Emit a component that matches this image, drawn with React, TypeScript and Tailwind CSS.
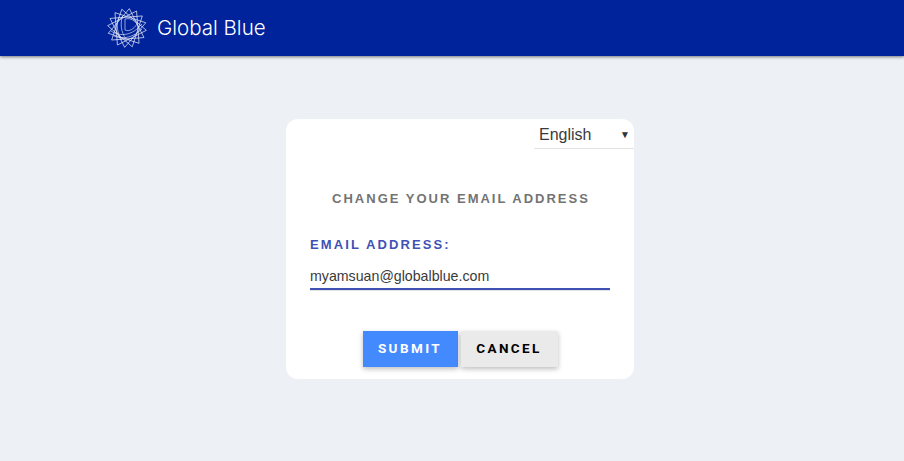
const spikes = 16;
const outer = Array.from({ length: spikes }, (_, i) => {
  const a = (i / spikes) * Math.PI * 2 - Math.PI / 2 + 0.12;
  return [20 + 19.5 * Math.cos(a), 20 + 19.5 * Math.sin(a)];
});

// lines running across the star, each one ends in a spike tip
const starPath = outer
  .map((_, i) => {
    const p = outer[(i * 5) % spikes];
    return `${i === 0 ? 'M' : 'L'}${p[0].toFixed(2)} ${p[1].toFixed(2)}`;
  })
  .join(' ') + ' Z';

const GlobeLogo = () => (
  <svg width="40" height="40" viewBox="0 0 40 40" fill="none" stroke="#e4e9f8" strokeWidth="0.75">
    <path d={starPath} />
    <path d="M12 9 C9 17 10 25 15 32 M15.5 8 C13 16 14 24 19 31 M18 11 L18 22 C22 24 27 21 30 16 C26 11 22 10 18 11 Z M4 23 C13 29 25 28 35 16 M7 28 C16 32 27 29 35 21" strokeOpacity="0.85" />
  </svg>
);

const App = () => {
  return (
    <div className="min-h-[461px] bg-[#edf0f5] font-['Liberation_Sans',Arial,sans-serif]">
      <header className="flex h-14 items-center bg-[#00229a] pl-[107px] shadow-[0_1px_3px_rgba(0,0,0,0.5)]">
        <GlobeLogo />
        <span className="ml-[10px] font-['Inter',sans-serif] text-[20.5px] font-light text-white">
          Global Blue
        </span>
      </header>

      <div className="flex justify-center pl-4 pt-[63px]">
        <div className="h-[260px] w-[348px] rounded-xl bg-white">
          <div className="flex justify-end">
            <div className="flex h-[30px] w-[100px] items-center justify-between border-b border-[#e2e2e6] pl-[5px] pr-[4px] pt-[2px] text-base text-[#3a3a3a]">
              <span>English</span>
              <span className="text-[10px] text-[#333]">▼</span>
            </div>
          </div>

          <h1 className="mt-[42px] pl-[2px] text-center text-[13px] font-bold leading-[16px] tracking-[2px] text-[#737373]">
            CHANGE YOUR EMAIL ADDRESS
          </h1>

          <div className="mt-[30px] px-6">
            <label className="block text-[13px] font-bold leading-[16px] tracking-[2.1px] text-[#3f51b5]">
              EMAIL ADDRESS:
            </label>
            <div className="mt-[15px] h-[22px] border-b-2 border-[#3f51b5] text-[14.2px] leading-[17px] text-[#3a3a3a] shadow-[0_1px_0_#e2e2e2]">
              myamsuan@globalblue.com
            </div>
          </div>

          <div className="mt-[41px] flex justify-center gap-[3px]">
            <button className="h-9 w-[95px] bg-[#448aff] pb-[1px] font-['Roboto',sans-serif] text-[13.5px] font-bold tracking-[2.4px] text-white shadow-[0_2px_5px_rgba(0,0,0,0.26)]">
              SUBMIT
            </button>
            <button className="h-9 w-[97px] bg-[#eaeaea] pb-[1px] font-['Roboto',sans-serif] text-[13.5px] font-bold tracking-[2.4px] text-black shadow-[0_2px_5px_rgba(0,0,0,0.26)]">
              CANCEL
            </button>
          </div>
        </div>
      </div>
    </div>
  );
};

export default App;
